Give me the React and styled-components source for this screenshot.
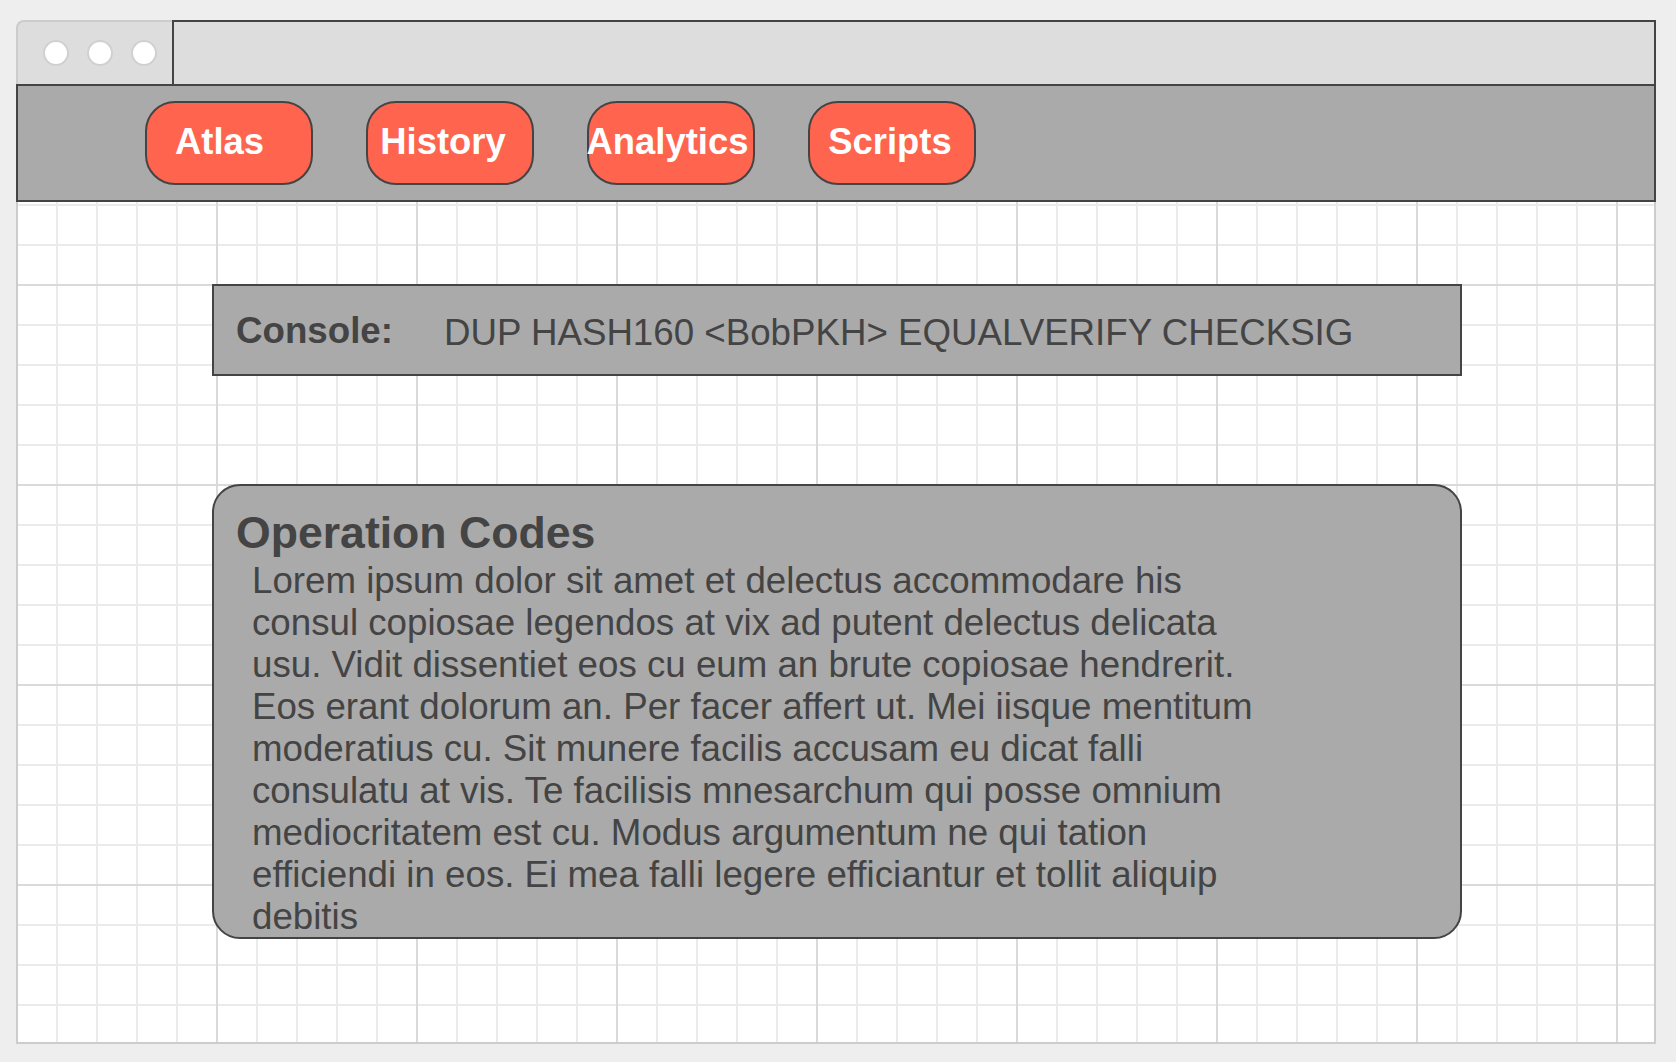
import React from 'react'
import styled, { createGlobalStyle } from 'styled-components'

const GlobalStyle = createGlobalStyle`
  html, body {
    margin: 0;
    padding: 0;
    background: #eeeeee;
  }
  body {
    font-family: "Liberation Sans", Arial, sans-serif;
    color: #444444;
  }
`;

const Window = styled.div`
  width: 1640px;
  height: 1024px;
  margin: 20px 0 0 16px;
  display: flex;
  flex-direction: column;
`;

const TitleBar = styled.div`
  height: 64px;
  display: flex;
  flex-shrink: 0;
`;

const Tab = styled.div`
  width: 156px;
  box-sizing: border-box;
  background: #dddddd;
  border-top: 2px solid #cccccc;
  border-left: 2px solid #cccccc;
  border-top-left-radius: 8px;
  display: flex;
  align-items: center;
  gap: 18px;
  padding-left: 25px;
`;

const Dot = styled.span`
  width: 26px;
  height: 26px;
  box-sizing: border-box;
  border-radius: 50%;
  background: #ffffff;
  border: 2px solid #d0d0d0;
`;

const Address = styled.div`
  flex: 1;
  background: #dddddd;
  border: 2px solid #444444;
  border-bottom: none;
`;

const Nav = styled.nav`
  height: 118px;
  box-sizing: border-box;
  flex-shrink: 0;
  background: #aaaaaa;
  border: 2px solid #444444;
  display: flex;
  align-items: center;
  gap: 53px;
  padding-left: 127px;
`;

const NavButton = styled.button`
  width: 168px;
  height: 84px;
  box-sizing: border-box;
  border: 2px solid #444444;
  border-radius: 30px;
  background: #ff644e;
  color: #ffffff;
  font-family: "Liberation Sans", Arial, sans-serif;
  font-weight: 700;
  font-size: 36.4px;
  white-space: nowrap;
  display: flex;
  align-items: center;
  justify-content: center;
  padding: 0 ${p => p.$shift || 0}px 3px 0;
  cursor: pointer;
`;

const Content = styled.main`
  flex: 1;
  box-sizing: border-box;
  border: 2px solid #cccccc;
  border-top: none;
  background-color: #ffffff;
  background-image:
    linear-gradient(to right, #dadada 2px, transparent 2px),
    linear-gradient(to bottom, #dadada 2px, transparent 2px),
    linear-gradient(to right, #ebebeb 2px, transparent 2px),
    linear-gradient(to bottom, #ebebeb 2px, transparent 2px);
  background-size: 200px 200px, 200px 200px, 40px 40px, 40px 40px;
  background-position: 198px 0, 0 82px, 38px 0, 0 2px;
  padding: 82px 0 0 194px;
  display: flex;
  flex-direction: column;
  gap: 108px;
`;

const Console = styled.div`
  width: 1250px;
  height: 92px;
  box-sizing: border-box;
  background: #aaaaaa;
  border: 2px solid #444444;
  display: flex;
  align-items: center;
  padding: 2px 0 0 22px;
  gap: 51px;
  font-size: 36.7px;
`;

const ConsoleLabel = styled.span`
  font-weight: 700;
`;

const ConsoleCode = styled.span`
  font-weight: 400;
  padding-top: 3px;
`;

const Panel = styled.section`
  width: 1250px;
  height: 455px;
  box-sizing: border-box;
  background: #aaaaaa;
  border: 2px solid #444444;
  border-radius: 28px;
  padding: 22px 0 0 22px;
`;

const PanelTitle = styled.h2`
  margin: 0;
  font-size: 44.6px;
  line-height: 50px;
  font-weight: 700;
`;

const PanelText = styled.p`
  margin: 2px 0 0 16px;
  width: 1020px;
  font-size: 36.7px;
  line-height: 42px;
`;

const tabs = [
  { label: 'Atlas', shift: 19 },
  { label: 'History', shift: 14 },
  { label: 'Analytics', shift: 7 },
  { label: 'Scripts', shift: 4 },
];

const lorem =
  'Lorem ipsum dolor sit amet et delectus accommodare his consul copiosae legendos at vix ad putent delectus delicata usu. Vidit dissentiet eos cu eum an brute copiosae hendrerit. Eos erant dolorum an. Per facer affert ut. Mei iisque mentitum moderatius cu. Sit munere facilis accusam eu dicat falli consulatu at vis. Te facilisis mnesarchum qui posse omnium mediocritatem est cu. Modus argumentum ne qui tation efficiendi in eos. Ei mea falli legere efficiantur et tollit aliquip debitis';

const App = () => {
  return (
    <>
      <GlobalStyle />
      <Window>
        <TitleBar>
          <Tab>
            <Dot />
            <Dot />
            <Dot />
          </Tab>
          <Address />
        </TitleBar>
        <Nav>
          {tabs.map(t => (
            <NavButton key={t.label} $shift={t.shift}>{t.label}</NavButton>
          ))}
        </Nav>
        <Content>
          <Console>
            <ConsoleLabel>Console:</ConsoleLabel>
            <ConsoleCode>DUP HASH160 &lt;BobPKH&gt; EQUALVERIFY CHECKSIG</ConsoleCode>
          </Console>
          <Panel>
            <PanelTitle>Operation Codes</PanelTitle>
            <PanelText>{lorem}</PanelText>
          </Panel>
        </Content>
      </Window>
    </>
  )
}

export default App
